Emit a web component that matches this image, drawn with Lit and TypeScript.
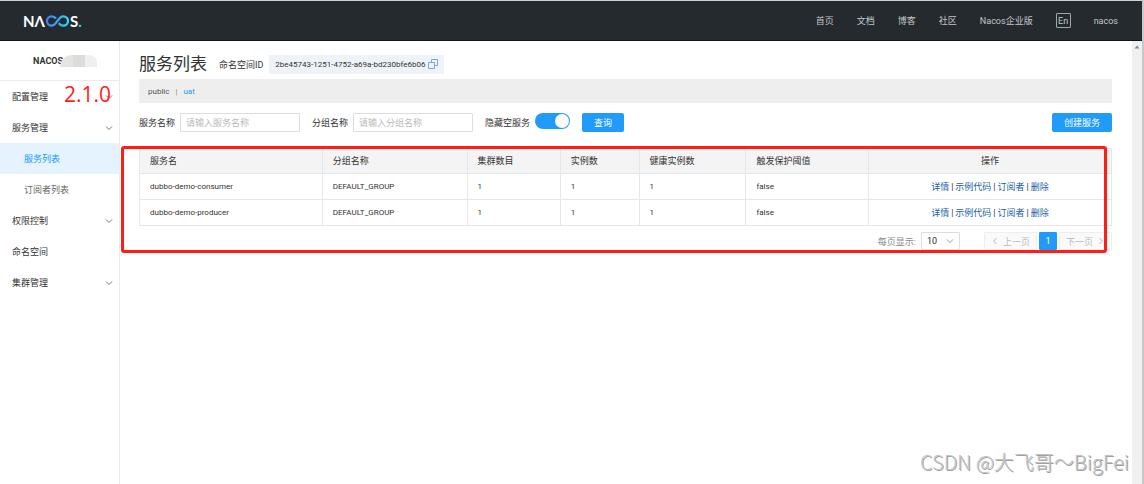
import { LitElement, html, css, svg } from "lit";
import { customElement, state } from "lit/decorators.js";
import { classMap } from "lit/directives/class-map.js";

interface MenuItem {
  label: string;
  group?: boolean;
  child?: boolean;
  active?: boolean;
}

const MENU: MenuItem[] = [
  { label: "配置管理", group: true },
  { label: "服务管理", group: true },
  { label: "服务列表", child: true, active: true },
  { label: "订阅者列表", child: true },
  { label: "权限控制", group: true },
  { label: "命名空间" },
  { label: "集群管理", group: true },
];

const SERVICES = [
  { name: "dubbo-demo-consumer", group: "DEFAULT_GROUP", clusters: 1, instances: 1, healthy: 1, threshold: false },
  { name: "dubbo-demo-producer", group: "DEFAULT_GROUP", clusters: 1, instances: 1, healthy: 1, threshold: false },
];

const ACTIONS = ["详情", "示例代码", "订阅者", "删除"];

const chevron = (d: string) => html`<svg class="chevron" viewBox="0 0 8 8" aria-hidden="true">
  ${svg`<path d=${d} fill="none" stroke="currentColor" stroke-width="1" />`}
</svg>`;
const DOWN = "M1 2.5 L4 5.5 L7 2.5";
const LEFT = "M5.5 1 L2.5 4 L5.5 7";
const RIGHT = "M2.5 1 L5.5 4 L2.5 7";

@customElement("nacos-header")
export class NacosHeader extends LitElement {
  static styles = css`
    :host { display: block; }
    .bar {
      box-sizing: border-box;
      display: flex;
      align-items: center;
      justify-content: space-between;
      height: 41px;
      padding: 0 24px 0 23px;
      background: #252a2f;
      border-top: 1px solid #cfd3d1;
      border-bottom: 1px solid #111519;
      color: #c3c6c8;
      font-size: 9px;
    }
    .logo {
      display: flex;
      align-items: center;
      color: #fff;
      font: 700 15px/16px Lato, sans-serif;
      text-decoration: none;
    }
    .loop { width: 25px; height: 12px; }
    .dot { color: #2adcf0; }
    .nav { display: flex; align-items: center; gap: 23px; }
    .nav a { color: inherit; text-decoration: none; }
    .lang {
      box-sizing: border-box;
      width: 15px;
      height: 15px;
      padding: 0;
      border: 1px solid #a3a6a8;
      border-radius: 1px;
      background: none;
      color: inherit;
      font: inherit;
      line-height: 12px;
    }
  `;

  render() {
    return html`<header class="bar">
      <a class="logo" href="#" aria-label="NACOS">
        <span>NΛ</span>
        <svg class="loop" viewBox="0 0 25 12" aria-hidden="true">
          <defs>
            <linearGradient id="g" x1="0" x2="1">
              <stop offset="0" stop-color="#4a7cf7" />
              <stop offset="0.5" stop-color="#3aa5f8" />
              <stop offset="1" stop-color="#2adcf0" />
            </linearGradient>
          </defs>
          <path
            d="M11 3.6 C9.9 2 8.5 1.3 6.8 1.3 C4.1 1.3 2 3.3 2 6 C2 8.7 4.1 10.7 6.8 10.7 C11.6 10.7 13 1.3 18.2 1.3 C20.9 1.3 23 3.3 23 6 C23 8.7 20.9 10.7 18.2 10.7 C16.4 10.7 14.8 9.8 13.8 8.2"
            fill="none" stroke="url(#g)" stroke-width="2.2" />
        </svg>
        <span>S</span><span class="dot">.</span>
      </a>
      <nav class="nav">
        <a href="#">首页</a>
        <a href="#">文档</a>
        <a href="#">博客</a>
        <a href="#">社区</a>
        <a href="#">Nacos企业版</a>
        <button class="lang">En</button>
        <a href="#">nacos</a>
      </nav>
    </header>`;
  }
}

@customElement("nacos-sidebar")
export class NacosSidebar extends LitElement {
  static styles = css`
    :host { display: block; position: relative; border-right: 1px solid #ebebeb; }
    .brand {
      box-sizing: border-box;
      display: flex;
      align-items: center;
      height: 40px;
      padding-left: 33px;
      border-bottom: 1px solid #ebebeb;
      color: #333;
      font-size: 9px;
      font-weight: 700;
    }
    .mask {
      width: 37px;
      height: 12px;
      margin-left: -3px;
      border-radius: 12px 8px 0 0;
      background: linear-gradient(90deg, #e4e6e6 0 36%, #dddcd9 36% 68%, #eeefef 68%);
    }
    .menu { margin: 0; padding: 0; list-style: none; }
    .item {
      display: flex;
      align-items: center;
      justify-content: space-between;
      height: 31px;
      padding: 0 6px 0 12px;
      color: #333;
      font-size: 9px;
      text-decoration: none;
    }
    .child { padding-left: 24px; color: #666; }
    .active { background: #e4f3fe; color: #209bfa; }
    .chevron { width: 8px; height: 8px; color: #777; }
    .version {
      position: absolute;
      top: 40px;
      left: 64px;
      color: #ff1e14;
      font: 21px/26px "Open Sans", sans-serif;
    }
  `;

  render() {
    return html`
      <div class="brand">NACOS<span class="mask"></span></div>
      <ul class="menu">
        ${MENU.map(
          (m) => html`<li>
            <a href="#" class=${classMap({ item: true, child: !!m.child, active: !!m.active })}>
              ${m.label}${m.group ? chevron(DOWN) : ""}
            </a>
          </li>`
        )}
      </ul>
      <span class="version">2.1.0</span>
    `;
  }
}

@customElement("service-list")
export class ServiceList extends LitElement {
  @state() private hideEmpty = true;

  static styles = css`
    :host { display: block; padding: 13px 20px 0 19px; color: #333; font-size: 9px; }
    .heading { display: flex; align-items: center; height: 20px; }
    h1 { margin: 0 12px 0 0; font-size: 17px; line-height: 20px; font-weight: 400; }
    .space-id {
      display: flex;
      align-items: center;
      gap: 3px;
      height: 19px;
      margin-left: 6px;
      padding: 0 6px;
      background: #eff3f8;
      color: #333;
      font-size: 8px;
    }
    .copy { display: flex; padding: 0; border: 0; background: none; color: #7ba7dc; }
    .copy svg { width: 10px; height: 10px; }
    .spaces {
      display: flex;
      align-items: center;
      gap: 6px;
      height: 24px;
      margin-top: 5px;
      padding: 0 9px;
      background: #eee;
      color: #888;
      font-size: 8px;
    }
    .spaces a { color: #555; text-decoration: none; }
    .spaces .current { color: #209bfa; }
    .filters { display: flex; align-items: center; height: 19px; margin-top: 10px; }
    .filters label { margin-right: 5px; }
    .text {
      box-sizing: border-box;
      width: 120px;
      height: 19px;
      margin-right: 12px;
      padding: 0 5px;
      border: 1px solid #ddd;
      border-radius: 1px;
      color: #333;
      font: inherit;
    }
    .text::placeholder { color: #bbb; }
    .switch {
      appearance: none;
      display: flex;
      box-sizing: border-box;
      width: 35px;
      height: 16px;
      margin: 0 12px 3px 0;
      padding: 1px;
      border-radius: 8px;
      background: #bbb;
    }
    .switch:checked { justify-content: flex-end; background: #209bfa; }
    .switch::before { content: ""; width: 14px; height: 14px; border-radius: 50%; background: #fff; }
    .primary {
      height: 19px;
      padding: 0 12px;
      border: 0;
      border-radius: 2px;
      background: #209bfa;
      color: #fff;
      font: inherit;
    }
    .create { margin-left: auto; }
    .results { position: relative; margin-top: 16px; }
    .highlight {
      position: absolute;
      inset: -2px 5px -3px -18px;
      border: 3px solid #ff1e14;
      border-radius: 3px;
      pointer-events: none;
    }
    table { width: 100%; border-collapse: collapse; table-layout: fixed; }
    th, td {
      box-sizing: border-box;
      height: 26px;
      padding: 0 10px;
      border: 1px solid #e6e7eb;
      text-align: left;
      font-weight: 400;
      line-height: 14px;
    }
    th { height: 25px; background: #f4f4f4; }
    td { font-size: 8px; }
    .c1 { width: 18.8%; }
    .c2 { width: 14.9%; }
    .c3 { width: 9.6%; }
    .c4 { width: 8.1%; }
    .c5 { width: 11%; }
    .c6 { width: 12.6%; }
    .ops { text-align: center; font-size: 9px; }
    .ops a { color: #1b5fa8; text-decoration: none; }
    .ops i { margin: 0 2px; font-style: normal; }
    .pager { display: flex; align-items: center; justify-content: flex-end; height: 18px; margin-top: 6px; color: #888; }
    .size { position: relative; display: flex; align-items: center; margin: 0 24px 0 5px; }
    .size select {
      appearance: none;
      box-sizing: border-box;
      width: 39px;
      height: 18px;
      padding: 0 5px;
      border: 1px solid #ddd;
      border-radius: 1px;
      background: #fff;
      color: #333;
      font: inherit;
    }
    .size .chevron { position: absolute; right: 6px; color: #999; pointer-events: none; }
    .chevron { width: 8px; height: 8px; }
    .pages { display: flex; gap: 2px; }
    .page {
      box-sizing: border-box;
      display: flex;
      align-items: center;
      justify-content: center;
      gap: 4px;
      height: 18px;
      min-width: 18px;
      padding: 0;
      border: 1px solid #eee;
      border-radius: 1px;
      background: #fafafa;
      color: #bbb;
      font: inherit;
    }
    .step { width: 53px; }
    .on { border-color: #209bfa; background: #209bfa; color: #fff; }
  `;

  render() {
    return html`
      <div class="heading">
        <h1>服务列表</h1>
        <span>命名空间ID</span>
        <div class="space-id">
          <span>2be45743-1251-4752-a69a-bd230bfe6b06</span>
          <button class="copy" aria-label="复制">
            <svg viewBox="0 0 10 10" fill="none" stroke="currentColor" aria-hidden="true">
              <path d="M3.5 3.5 V0.5 H9.5 V6.5 H6.5 M0.5 3.5 H6.5 V9.5 H0.5 Z" />
            </svg>
          </button>
        </div>
      </div>
      <nav class="spaces">
        <a href="#">public</a><span>|</span><a class="current" href="#">uat</a>
      </nav>
      <form class="filters" @submit=${(e: Event) => e.preventDefault()}>
        <label for="service">服务名称</label>
        <input class="text" id="service" placeholder="请输入服务名称" />
        <label for="group">分组名称</label>
        <input class="text" id="group" placeholder="请输入分组名称" />
        <label for="hide">隐藏空服务</label>
        <input
          class="switch"
          id="hide"
          type="checkbox"
          .checked=${this.hideEmpty}
          @change=${(e: Event) => (this.hideEmpty = (e.target as HTMLInputElement).checked)}
        />
        <button class="primary">查询</button>
        <button class="primary create" type="button">创建服务</button>
      </form>
      <section class="results">
        <table>
          <thead>
            <tr>
              <th class="c1">服务名</th>
              <th class="c2">分组名称</th>
              <th class="c3">集群数目</th>
              <th class="c4">实例数</th>
              <th class="c5">健康实例数</th>
              <th class="c6">触发保护阈值</th>
              <th class="ops">操作</th>
            </tr>
          </thead>
          <tbody>
            ${SERVICES.map(
              (s) => html`<tr>
                <td>${s.name}</td>
                <td>${s.group}</td>
                <td>${s.clusters}</td>
                <td>${s.instances}</td>
                <td>${s.healthy}</td>
                <td>${String(s.threshold)}</td>
                <td class="ops">${ACTIONS.map((a, i) => html`${i ? html`<i>|</i>` : ""}<a href="#">${a}</a>`)}</td>
              </tr>`
            )}
          </tbody>
        </table>
        <div class="pager">
          <label for="size">每页显示:</label>
          <div class="size">
            <select id="size"><option>10</option><option>20</option><option>50</option></select>
            ${chevron(DOWN)}
          </div>
          <div class="pages">
            <button class="page step" disabled>${chevron(LEFT)}上一页</button>
            <button class="page on">1</button>
            <button class="page step" disabled>下一页${chevron(RIGHT)}</button>
          </div>
        </div>
        <div class="highlight"></div>
      </section>
    `;
  }
}

@customElement("app-root")
export class AppRoot extends LitElement {
  static styles = css`
    :host {
      display: grid;
      position: relative;
      box-sizing: border-box;
      min-height: 100vh;
      grid-template-columns: 120px minmax(0, 1fr) 10px;
      grid-template-rows: auto 1fr;
      border-right: 2px solid #c8c8c8;
      background: #fff;
      font-family: Roboto, "Noto Sans CJK SC", sans-serif;
    }
    nacos-header { grid-column: 1 / -1; }
    .track { display: flex; justify-content: center; padding-top: 4px; background: #f0f0f0; }
    .track svg { width: 6px; height: 4px; }
    .watermark {
      position: absolute;
      right: 13px;
      bottom: 8px;
      color: #c4c4c4;
      font: 300 20px/28px "Noto Sans CJK SC", sans-serif;
      text-shadow: 1px 1px 0 #a0a0a0;
    }
  `;

  render() {
    return html`
      <nacos-header></nacos-header>
      <nacos-sidebar></nacos-sidebar>
      <service-list></service-list>
      <div class="track">
        <svg viewBox="0 0 6 4" aria-hidden="true"><path d="M0.5 3.5 L3 0.5 L5.5 3.5 Z" fill="#8a8a8a" /></svg>
      </div>
      <div class="watermark">CSDN @大飞哥～BigFei</div>
    `;
  }
}
